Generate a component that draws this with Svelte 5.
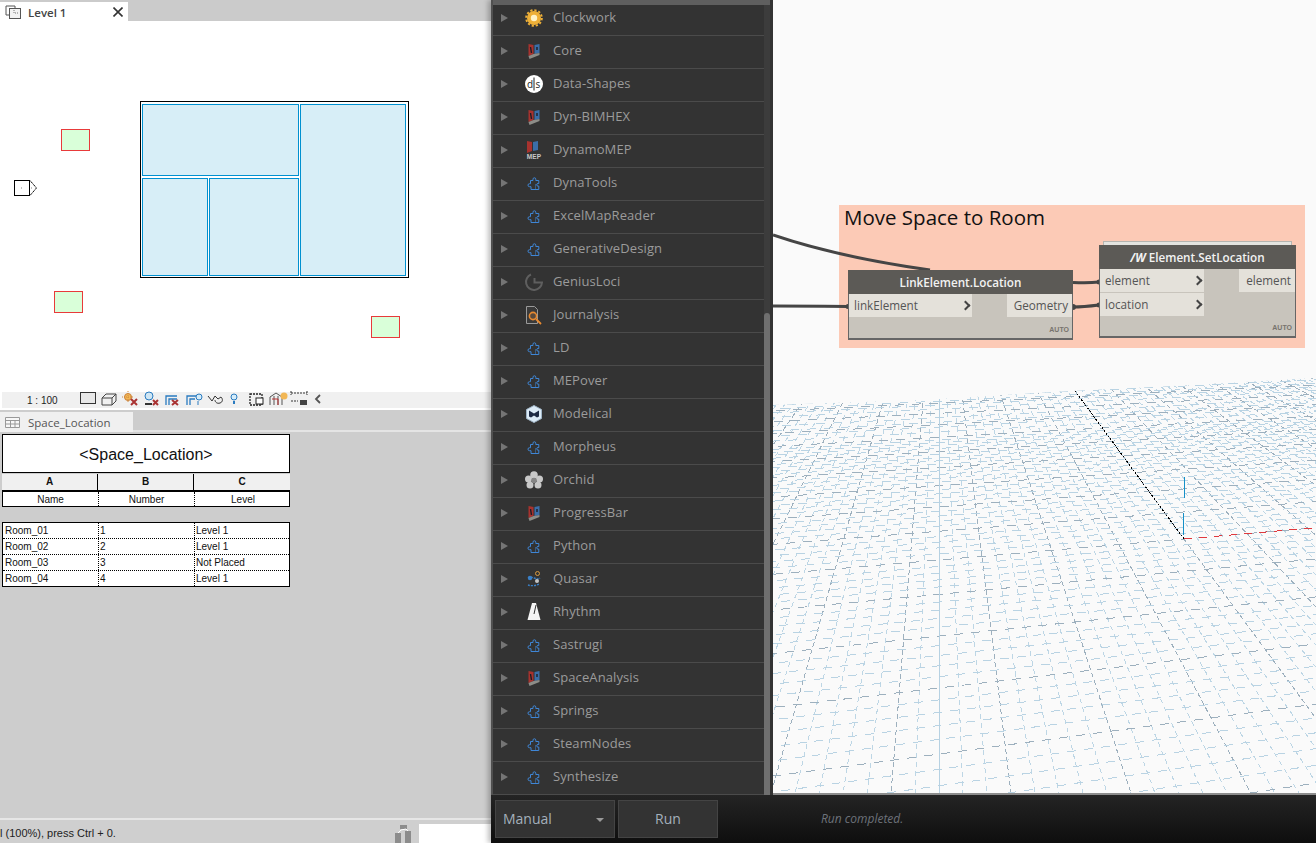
<script>
  // perspective floor of the background preview
  const a = 0.003503, b = 0.0177;
  const project = (u, v) => {
    const d = 1 + a * u + b * v;
    return [(939 + a * u * 5069 + b * v * 939) / d - 773, (560 + a * u * 206 + b * v * 206) / d];
  };
  const seg = (u1, v1, u2, v2) => {
    const [x1, y1] = project(u1, v1);
    const [x2, y2] = project(u2, v2);
    return `M${x1.toFixed(1)} ${y1.toFixed(1)}L${x2.toFixed(1)} ${y2.toFixed(1)}`;
  };
  let acrossMinor = '', acrossMajor = '', alongMinor = '', alongMajor = '';
  for (let v = -26; v <= 62; v++) {
    if (v % 5 === 0) acrossMajor += seg(-40, v, 95, v);
    // rows get too tight far away, drop every other one
    else if (v < 30 || v % 2 === 0) acrossMinor += seg(-40, v, 95, v);
  }
  for (let u = -40; u <= 95; u++) {
    if (u === 0) continue;
    if ((u + 100) % 5 === 3) alongMajor += seg(u, -26, u, 62);
    else alongMinor += seg(u, -26, u, 62);
  }
  const solidLine = seg(0, -26, 0, 62);
  const blackAxis = seg(18, 0, 18, 62);
  const redAxis = seg(18, 0, 95, 0);

  const packages = [
    ['Clockwork', 'gear'], ['Core', 'dyn'], ['Data-Shapes', 'ds'], ['Dyn-BIMHEX', 'dyn'],
    ['DynamoMEP', 'mep'], ['DynaTools', 'puzzle'], ['ExcelMapReader', 'puzzle'],
    ['GenerativeDesign', 'puzzle'], ['GeniusLoci', 'loci'], ['Journalysis', 'journal'],
    ['LD', 'puzzle'], ['MEPover', 'puzzle'], ['Modelical', 'hex'], ['Morpheus', 'puzzle'],
    ['Orchid', 'orchid'], ['ProgressBar', 'dyn'], ['Python', 'puzzle'], ['Quasar', 'quasar'],
    ['Rhythm', 'rhythm'], ['Sastrugi', 'puzzle'], ['SpaceAnalysis', 'dyn'], ['Springs', 'puzzle'],
    ['SteamNodes', 'puzzle'], ['Synthesize', 'puzzle']
  ];

  const rooms = [
    ['Room_01', '1', 'Level 1'],
    ['Room_02', '2', 'Level 1'],
    ['Room_03', '3', 'Not Placed'],
    ['Room_04', '4', 'Level 1']
  ];
</script>

{#snippet libIcon(kind)}
  <svg class="lib-icon" viewBox="0 0 20 20">
    {#if kind === 'gear'}
      <circle cx="10" cy="10" r="7" fill="#eeb038" />
      <circle cx="10" cy="10" r="7.800" fill="none" stroke="#eeb038" stroke-width="2" stroke-dasharray="2.200 1.900" />
      <circle cx="10" cy="10" r="3.200" fill="#fff3c8" />
    {:else if kind === 'dyn'}
      <polygon points="4.500,3 9.500,4 9.500,13 4.500,15" fill="#a8322e" />
      <polygon points="10.500,4 15.500,3 15.500,12 10.500,13" fill="#3b6ea8" />
      <polygon points="4.500,15 9.500,13 15.500,12 15.500,14 5.500,18" fill="#8d8d88" />
      <path d="M6.500 6l1 6M13 6v3" stroke="#1d1d25" stroke-width="1.400" />
    {:else if kind === 'mep'}
      <polygon points="3,1 8,2 8,11 3,13" fill="#a8322e" />
      <polygon points="9,2 14,1 14,10 9,11" fill="#3b6ea8" />
      <text class="mep" x="10" y="18.500">MEP</text>
    {:else if kind === 'ds'}
      <circle cx="10" cy="10" r="9" fill="#fff" />
      <text class="ds" x="6" y="13.500">d</text>
      <text class="ds" x="14" y="13.500">s</text>
      <path d="M10 3.500v13" stroke="#222" stroke-width="1" />
    {:else if kind === 'loci'}
      <path d="M7 2.500A8 8 0 1 0 18 10.500H10.500V6" fill="none" stroke="#5f5f5f" stroke-width="2" />
    {:else if kind === 'journal'}
      <path d="M2.500 1.500h8l3 3v14h-11z" fill="#3a3a3a" stroke="#9a9a9a" />
      <circle cx="9" cy="11" r="3.600" fill="#5a4a3c" stroke="#e88a30" stroke-width="1.600" />
      <path d="M12 14l5 5" stroke="#e88a30" stroke-width="1.800" />
    {:else if kind === 'hex'}
      <polygon points="10,1.500 17.500,5.500 17.500,14.500 10,18.500 2.500,14.500 2.500,5.500" fill="#dcebf7" stroke="#9fb4c6" />
      <path d="M5 6.500l5 3 5-3v6l-2 1-3-2-3 2-2-1z" fill="#1d2a44" />
    {:else if kind === 'orchid'}
      <g fill="#c8c8c8">
        <circle cx="10" cy="5" r="3.800" /><circle cx="4.500" cy="9" r="3.500" /><circle cx="15.500" cy="9" r="3.500" />
        <circle cx="6" cy="15" r="3.500" /><circle cx="14" cy="15" r="3.500" />
      </g>
      <circle cx="10" cy="10.500" r="2.800" fill="#858585" />
    {:else if kind === 'quasar'}
      <path d="M4 9c4-3 8 3 12 0M4 16c3 1 8 1 11-1" fill="none" stroke="#3a80c8" stroke-width="1.400" stroke-dasharray="2 1" />
      <circle cx="13.500" cy="4.500" r="2" fill="none" stroke="#d89a40" />
      <circle cx="6" cy="9" r="2.200" fill="#3a80c8" />
      <circle cx="13" cy="12" r="2" fill="#c4c4c4" />
    {:else if kind === 'rhythm'}
      <path d="M8 1h4l4.500 17h-13z" fill="#f4f4f4" />
      <path d="M10 12l2-9" stroke="#333" stroke-width="1" />
    {:else}
      <path d="M6.500 7.500H9V6.200a1.400 1.400 0 1 1 2.800 0v1.300h3v3h-.8a1.300 1.300 0 1 0 0 2.600h.8v3.400H7v-2.800H5.500a1.500 1.500 0 1 1 0-3H6.500z" fill="none" stroke="#3f86d6" stroke-width="1" />
      <path d="M11.500 11.500v5" stroke="#3f86d6" stroke-width="1" stroke-dasharray="1 1" />
    {/if}
  </svg>
{/snippet}

<div class="app">
  <section class="revit">
    <div class="tab-strip">
      <div class="doc-tab">
        <svg class="tab-icon" viewBox="0 0 17 14">
          <path d="M1 1h9v2M1 1v9h3" fill="none" stroke="#555" />
          <rect x="4.500" y="3.500" width="11" height="10" fill="#f2f2f2" stroke="#555" />
          <path d="M9 5v3h4" fill="none" stroke="#777" stroke-dasharray="1 1" />
        </svg>
        <span class="tab-title">Level 1</span>
        <svg class="tab-close" viewBox="0 0 10 10"><path d="M0.500 0.500l9 9M9.500 0.500l-9 9" stroke="#333" stroke-width="1.600" /></svg>
      </div>
    </div>

    <svg class="plan" viewBox="0 21 491 371">
      <rect x="140.500" y="101.500" width="268" height="176" fill="#fff" stroke="#000" />
      <g class="room">
        <rect x="142.500" y="104.500" width="156" height="71" />
        <rect x="300.500" y="104.500" width="105" height="171" />
        <rect x="142.500" y="178.500" width="65" height="97" />
        <rect x="209.500" y="178.500" width="89" height="97" />
      </g>
      <g class="space">
        <rect x="61.500" y="129.500" width="28" height="21" />
        <rect x="54.500" y="291.500" width="28" height="21" />
        <rect x="371.500" y="316.500" width="28" height="21" />
      </g>
      <rect x="14.500" y="180.500" width="15" height="15" fill="#fff" stroke="#000" />
      <path d="M30 180.500l6.500 7.500-6.500 7.500" fill="none" stroke="#000" stroke-dasharray="1.500 0.500" />
      <path d="M21 188h1M31 188h1" stroke="#888" />
    </svg>

    <div class="view-bar">
      <span class="scale">1 : 100</span>
      <svg class="view-icons" viewBox="0 0 245 17">
        <rect x="1.500" y="1.500" width="15" height="11" fill="#e8e8e8" stroke="#333" />
        <path d="M23 7h10v7H23zM23 7l4-4h10v7l-4 4M33 7l4-4" fill="none" stroke="#444" />
        <circle cx="49" cy="6" r="3.500" fill="#f2b755" stroke="#c9803a" />
        <path d="M49 0v12M43 6h12" stroke="#d08a40" stroke-dasharray="1 1" />
        <path d="M52 8l6 6M58 8l-6 6" stroke="#a33" stroke-width="2" />
        <circle cx="70" cy="5" r="4" fill="#cfe6f4" stroke="#2a7bc0" />
        <path d="M66 13h7" stroke="#333" stroke-width="2" />
        <path d="M74 9l5 5M79 9l-5 5" stroke="#a33" stroke-width="2" />
        <path d="M87 14V5h11M90 14V8h8" fill="none" stroke="#2a7bc0" stroke-width="1.300" />
        <path d="M93 9l6 5M99 9l-6 5" stroke="#a33" stroke-width="2" />
        <path d="M108 14V5h9M111 14V8h5" fill="none" stroke="#2a7bc0" stroke-width="1.300" />
        <circle cx="120" cy="6" r="3" fill="#d5ecf9" stroke="#2a7bc0" />
        <path d="M119 10v4" stroke="#2a7bc0" />
        <path d="M129 5l4 5 3-5 3 3 3-2c2 2 2 5-1 6s-5-1-5-3" fill="none" stroke="#333" />
        <circle cx="155" cy="6" r="3" fill="#d5ecf9" stroke="#2a7bc0" />
        <path d="M154 10h2v3h-2z" fill="#2a7bc0" />
        <path d="M171 3h12v11h-12z" fill="none" stroke="#222" stroke-width="1.300" stroke-dasharray="2 1" />
        <rect x="177" y="7" width="7" height="6" fill="#fff" stroke="#222" />
        <path d="M191 14V6l6-4 6 4v8M195 14V5M199 14V5" fill="none" stroke="#555" />
        <path d="M193 8h6v6" fill="none" stroke="#b33" />
        <circle cx="205" cy="5" r="3.500" fill="#f2b755" />
        <path d="M212 2h16M212 0v4M228 0v4M212 10h7" stroke="#333" stroke-dasharray="2 1" />
        <rect x="221" y="9" width="7" height="5" fill="#444" />
        <path d="M241 4l-4 4 4 4" fill="none" stroke="#555" stroke-width="1.800" />
      </svg>
    </div>

    <div class="sheet-wrap">
      <div class="sheet-tabs">
        <div class="sheet-tab">
          <svg class="sheet-icon" viewBox="0 0 15 11">
            <path d="M0.500 0.500h14v10h-14zM0.500 3.500h14M0.500 7h14M5.500 3.500v7M10 3.500v7" fill="#f7f7f7" stroke="#999" />
          </svg>
          Space_Location
        </div>
      </div>
      <div class="schedule">
        <div class="title">&lt;Space_Location&gt;</div>
        <div class="row letters"><span>A</span><span>B</span><span>C</span></div>
        <div class="row heads"><span>Name</span><span>Number</span><span>Level</span></div>
        <div class="spacer"></div>
        <div class="body">
          {#each rooms as room}
            <div class="row data">
              {#each room as cell}<span>{cell}</span>{/each}
            </div>
          {/each}
        </div>
      </div>
    </div>

    <div class="status">
      <span class="status-text">l (100%), press Ctrl + 0.</span>
      <svg class="status-icon" viewBox="0 0 16 18">
        <g fill="#8c8c8c">
          <rect x="5" y="0" width="7" height="4" />
          <rect x="0" y="8" width="6" height="10" />
          <rect x="10" y="6" width="6" height="12" />
        </g>
        <path d="M6 5l5-1M3 8l3-3M13 6l-2-2" stroke="#fff" />
      </svg>
      <div class="status-input"></div>
    </div>
  </section>

  <section class="dynamo">
    <div class="workspace">
      <aside class="library">
        <div class="library-top"></div>
        <div class="list">
          {#each packages as [name, kind]}
            <div class="pkg">
              <span class="arrow"></span>
              {@render libIcon(kind)}
              <span class="pkg-name">{name}</span>
            </div>
          {/each}
        </div>
        <div class="scroll-track"><div class="scroll-thumb"></div></div>
      </aside>

      <div class="canvas">
        <svg class="floor" viewBox="0 0 543 793">
          <defs>
            <clipPath id="floorClip">
              <polygon points="0,405 150,400 298,391 420,385 543,378 543,793 0,793" />
            </clipPath>
          </defs>
          <g clip-path="url(#floorClip)">
            <path class="along-minor" d={alongMinor} />
            <path class="along-major" d={alongMajor} />
            <path class="across-minor" d={acrossMinor} />
            <path class="across-major" d={acrossMajor} />
            <path class="solid" d={solidLine} />
            <path class="black" d={blackAxis} />
            <path class="red" d={redAxis} />
            <path class="blue" d="M411 477v21M410 513v22" />
          </g>
        </svg>

        <div class="group"><span class="group-title">Move Space to Room</span></div>

        <svg class="wires" viewBox="0 0 543 400">
          <path d="M0 235C50 252 100 262 157 270" />
          <path d="M0 306C30 306 50 306.500 75 306.500" />
          <path d="M300 282.500C310 283 318 283 326 282" />
          <path d="M300 307C310 307 318 306 326 305" />
          <g class="nubs">
            <circle cx="75" cy="306.500" r="2.500" />
            <circle cx="300" cy="307" r="3" />
            <circle cx="326" cy="282" r="2.500" />
            <circle cx="326" cy="305" r="2.500" />
          </g>
        </svg>

        <div class="node location">
          <div class="node-head">LinkElement.Location</div>
          <div class="node-body">
            <div class="ports">
              <div class="port in"><span>linkElement</span><i class="chev"></i></div>
            </div>
            <div class="outs"><div class="port out">Geometry</div></div>
          </div>
          <span class="auto">AUTO</span>
        </div>

        <div class="node setter">
          <div class="stack"></div>
          <div class="node-head"><b class="lacing">/W</b> Element.SetLocation</div>
          <div class="node-body">
            <div class="ports">
              <div class="port in"><span>element</span><i class="chev"></i></div>
              <div class="port in"><span>location</span><i class="chev"></i></div>
            </div>
            <div class="outs"><div class="port out">element</div></div>
          </div>
          <span class="auto">AUTO</span>
        </div>
      </div>
    </div>

    <footer class="run-bar">
      <div class="run-mode">Manual<i class="caret"></i></div>
      <div class="run-btn">Run</div>
      <span class="run-status">Run completed.</span>
    </footer>
  </section>
</div>

<style>
  :global(body) {
    margin: 0;
    overflow: hidden;
  }
  .app {
    display: grid;
    grid-template-columns: 491px 825px;
    width: 1316px;
    height: 843px;
    overflow: hidden;
    font-family: "Liberation Sans", sans-serif;
  }

  /* left: revit views */
  .revit {
    display: flex;
    flex-direction: column;
    height: 843px;
    background: #fff;
  }
  .tab-strip {
    height: 21px;
    background: #cbcbcb;
    flex: none;
  }
  .doc-tab {
    display: flex;
    align-items: center;
    width: 128px;
    height: 20px;
    margin-top: 1px;
    background: #fff;
    box-sizing: border-box;
    padding-left: 5px;
    position: relative;
    top: 1px;
  }
  .tab-icon {
    width: 17px;
    height: 14px;
  }
  .tab-title {
    margin-left: 6px;
    font: 600 11.500px "Open Sans", sans-serif;
    color: #444;
  }
  .tab-close {
    width: 10px;
    height: 10px;
    margin-left: auto;
    margin-right: 5px;
  }
  .plan {
    display: block;
    width: 491px;
    height: 371px;
    flex: none;
  }
  .room rect {
    fill: #d7eef7;
    stroke: #0090d0;
  }
  .space rect {
    fill: #d9ffd9;
    stroke: #e83a3a;
  }
  .view-bar {
    display: flex;
    align-items: center;
    height: 16px;
    margin-left: 2px;
    background: #f0f0f0;
    flex: none;
  }
  .scale {
    margin-left: 25px;
    width: 52px;
    font-size: 10px;
    color: #222;
  }
  .view-icons {
    width: 245px;
    height: 17px;
    margin-top: -2px;
  }
  .sheet-wrap {
    flex: 1;
    margin-top: 2px;
    background: #cdcdcd;
    min-height: 0;
  }
  .sheet-tabs {
    height: 22px;
    padding-top: 2px;
    box-sizing: border-box;
    border-bottom: 2px solid #e4e4e4;
  }
  .sheet-tab {
    display: flex;
    align-items: center;
    gap: 8px;
    width: 133px;
    height: 20px;
    box-sizing: border-box;
    padding-left: 5px;
    background: #f0f0f0;
    font: 11.500px "Open Sans", sans-serif;
    color: #555;
  }
  .sheet-icon {
    width: 15px;
    height: 11px;
  }
  .schedule {
    width: 288px;
    margin: 2px 0 0 2px;
    font-size: 10px;
    color: #111;
  }
  .title {
    height: 39px;
    box-sizing: border-box;
    border: 1px solid #000;
    background: #fff;
    text-align: center;
    font-size: 16px;
    line-height: 40px;
  }
  .row {
    display: grid;
    grid-template-columns: 95px 96px 97px;
  }
  .row span {
    overflow: hidden;
    white-space: nowrap;
  }
  .letters {
    margin-top: 1px;
    height: 16px;
    background: #f0f0f0;
    font-weight: bold;
    line-height: 16px;
    text-align: center;
    border-bottom: 2px solid #000;
  }
  .letters span + span {
    border-left: 1px solid #000;
  }
  .heads {
    height: 15px;
    box-sizing: border-box;
    background: #fff;
    border: solid #000;
    border-width: 0 1px 1px;
    text-align: center;
    line-height: 16px;
  }
  .heads span + span,
  .data span + span {
    border-left: 1px dotted #000;
  }
  .spacer {
    height: 15px;
  }
  .body {
    border: 1px solid #000;
    background: #fff;
  }
  .data {
    height: 16px;
    box-sizing: border-box;
    line-height: 15px;
    border-bottom: 1px dotted #000;
  }
  .data:last-child {
    height: 15px;
    border-bottom: none;
  }
  .data span {
    padding-left: 2px;
  }
  .data span + span {
    padding-left: 1px;
  }
  .status {
    display: flex;
    align-items: center;
    height: 25px;
    flex: none;
    background: #cfcfcf;
    border-top: 2px solid #e6e6e6;
    box-sizing: border-box;
  }
  .status-text {
    font-size: 11px;
    color: #222;
    margin-top: 3px;
  }
  .status-icon {
    width: 16px;
    height: 18px;
    margin-left: auto;
    margin-right: 8px;
    align-self: flex-end;
  }
  .status-input {
    width: 72px;
    height: 19px;
    align-self: flex-end;
    background: #fff;
  }

  /* right: dynamo */
  .dynamo {
    position: relative;
    display: flex;
    flex-direction: column;
    height: 843px;
    box-shadow: -3px 0 5px rgba(0, 0, 0, 0.25);
  }
  .workspace {
    display: flex;
    height: 795px;
    flex: none;
  }
  .library {
    position: relative;
    display: flex;
    width: 282px;
    height: 795px;
    flex: none;
    box-sizing: border-box;
    border-left: 2px solid #505050;
    background: #333;
    overflow: hidden;
  }
  .library-top {
    position: absolute;
    top: 0;
    left: 0;
    width: 277px;
    height: 5px;
    background: #5f5f5f;
    z-index: 1;
  }
  .list {
    width: 271px;
    padding-top: 3px;
    flex: none;
  }
  .pkg {
    display: flex;
    align-items: center;
    height: 33px;
    box-sizing: border-box;
    padding-bottom: 2px;
    border-bottom: 1px solid #4b4b4b;
    font: 13px "Open Sans", sans-serif;
    letter-spacing: 0.1px;
    color: #9b9b9b;
  }
  .arrow {
    width: 0;
    height: 0;
    margin-left: 8px;
    border-left: 7px solid #757575;
    border-top: 4px solid transparent;
    border-bottom: 4px solid transparent;
  }
  .lib-icon {
    width: 20px;
    height: 20px;
    margin-left: 16px;
    flex: none;
  }
  .pkg-name {
    margin-left: 9px;
    margin-bottom: 2px;
  }
  .mep {
    font: bold 6.500px "Liberation Sans", sans-serif;
    fill: #c8c8c8;
    text-anchor: middle;
  }
  .ds {
    font: 10px "Open Sans", sans-serif;
    fill: #222;
    text-anchor: middle;
  }
  .scroll-track {
    width: 6px;
    background: #3c3c3c;
    flex: none;
  }
  .scroll-thumb {
    margin-top: 313px;
    height: 482px;
    border-radius: 3px 3px 0 0;
    background: #6f6f6f;
  }
  .canvas {
    position: relative;
    width: 543px;
    height: 795px;
    background: #fafafa;
    border-bottom: 2px solid #8c8c8c;
    box-sizing: border-box;
    overflow: hidden;
  }
  .floor {
    position: absolute;
    left: 0;
    top: 0;
    width: 543px;
    height: 793px;
  }
  .floor path {
    fill: none;
    shape-rendering: crispEdges;
  }
  .along-minor {
    stroke: #bdd6e5;
    stroke-dasharray: 5 4;
  }
  .along-major {
    stroke: #9db0be;
    stroke-dasharray: 5 3;
  }
  .across-minor {
    stroke: #b9d3e3;
    stroke-dasharray: 9 8;
  }
  .across-major {
    stroke: #9db0be;
    stroke-dasharray: 9 8;
  }
  .solid {
    stroke: #b6d1e2;
  }
  .black {
    stroke: #000;
    stroke-dasharray: 2 1.500;
  }
  .red {
    stroke: #e0393e;
    stroke-dasharray: 8 7;
  }
  .blue {
    stroke: #1490c8;
  }
  .group {
    position: absolute;
    left: 66px;
    top: 205px;
    width: 466px;
    height: 143px;
    background: #fccab6;
  }
  .group-title {
    position: absolute;
    left: 5px;
    top: -2px;
    font: 20.500px "Open Sans", sans-serif;
    color: #111;
    white-space: nowrap;
  }
  .wires {
    position: absolute;
    left: 0;
    top: 0;
    width: 543px;
    height: 400px;
    fill: none;
    stroke: #454545;
    stroke-width: 3;
  }
  .nubs {
    fill: #454545;
    stroke: none;
  }
  .node {
    position: absolute;
    box-sizing: border-box;
    background: #c8c4bc;
    border: solid #666;
    border-width: 0 1px 2px;
    font: 11.700px "Open Sans", sans-serif;
  }
  .location {
    left: 75px;
    top: 270px;
    width: 225px;
    height: 70px;
  }
  .setter {
    left: 326px;
    top: 245px;
    width: 197px;
    height: 93px;
  }
  .stack {
    position: absolute;
    left: 3px;
    right: 3px;
    top: -4px;
    height: 3px;
    border: 1px solid #b5b5b0;
    border-bottom: none;
    background: #e4e4e0;
  }
  .node-head {
    height: 24px;
    margin: 0 -1px;
    background: #5c5a56;
    color: #f2f2f2;
    font-weight: 600;
    line-height: 25px;
    text-align: center;
  }
  .lacing {
    font-style: italic;
    font-weight: 700;
  }
  .node-body {
    display: flex;
    justify-content: space-between;
    align-items: flex-start;
    color: #555;
  }
  .ports {
    display: flex;
    flex-direction: column;
    gap: 1px;
  }
  .port {
    height: 23px;
    line-height: 23px;
    background: #e4e1da;
  }
  .in {
    display: flex;
    justify-content: space-between;
    align-items: center;
    padding: 0 3px 0 5px;
    box-sizing: border-box;
  }
  .location .in {
    width: 123px;
  }
  .setter .in {
    width: 104px;
    height: 23px;
  }
  .out {
    padding: 0 4px 0 7px;
  }
  .chev {
    width: 5px;
    height: 5px;
    border: solid #444;
    border-width: 2px 2px 0 0;
    transform: rotate(45deg);
  }
  .auto {
    position: absolute;
    right: 3px;
    bottom: 5px;
    font: bold 7px "Liberation Sans", sans-serif;
    color: #77736d;
  }
  .run-bar {
    display: flex;
    align-items: flex-start;
    flex: 1;
    padding: 5px 0 0 4px;
    box-sizing: border-box;
    background: linear-gradient(to bottom, #242424, #0e0e0e);
    font: 14px "Open Sans", sans-serif;
    color: #a4b0bc;
  }
  .run-mode {
    position: relative;
    width: 120px;
    height: 38px;
    box-sizing: border-box;
    padding-left: 7px;
    line-height: 35px;
    background: #333;
    border: 1px solid #444;
  }
  .caret {
    position: absolute;
    right: 10px;
    top: 17px;
    border-top: 4px solid #9a9a9a;
    border-left: 4px solid transparent;
    border-right: 4px solid transparent;
  }
  .run-btn {
    width: 100px;
    height: 38px;
    margin-left: 3px;
    box-sizing: border-box;
    line-height: 35px;
    text-align: center;
    background: #333;
    border: 1px solid #444;
  }
  .run-status {
    margin-left: 103px;
    margin-top: 10px;
    font-size: 12px;
    font-style: italic;
    color: #6d727a;
  }
</style>
